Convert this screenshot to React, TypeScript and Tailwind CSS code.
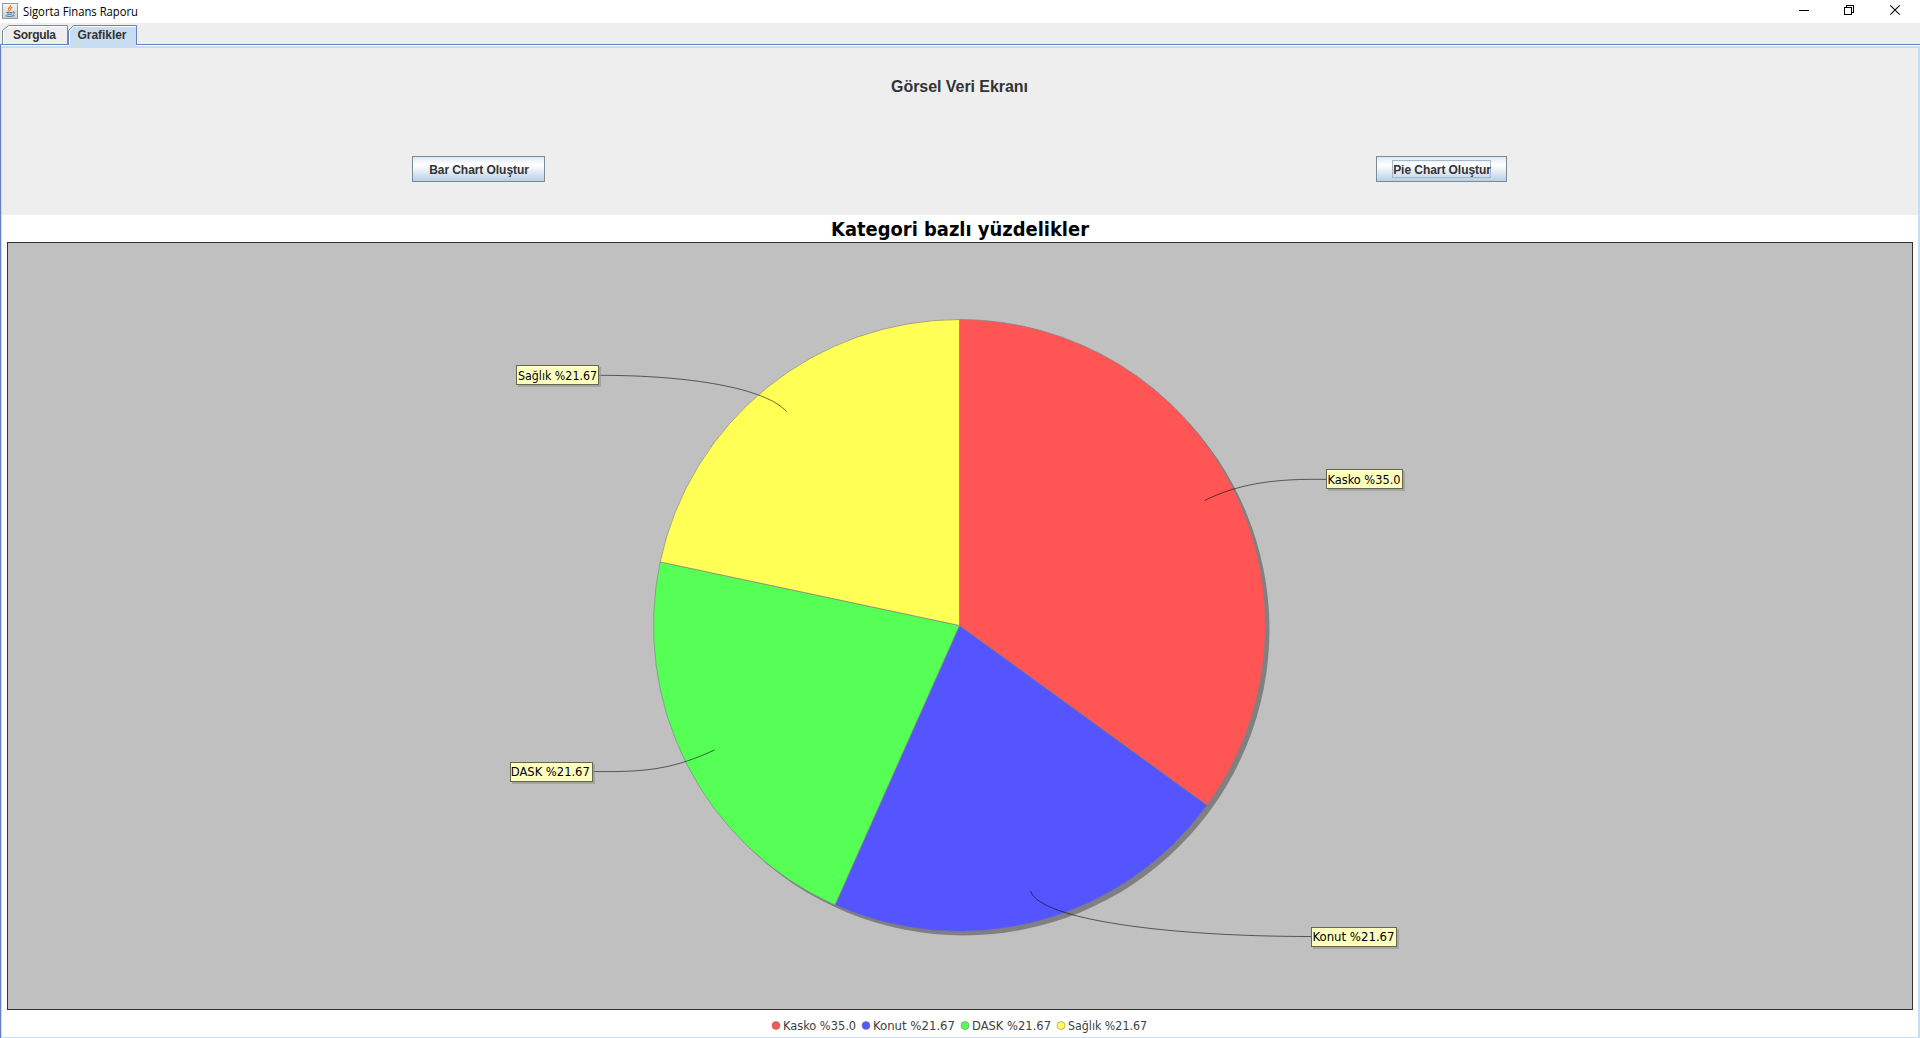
const CX = 959.5;
const CY = 625.5;
const R = 306;

const point = (deg: number) => {
  const a = (deg * Math.PI) / 180;
  return `${(CX + R * Math.sin(a)).toFixed(2)} ${(CY - R * Math.cos(a)).toFixed(2)}`;
};

const slices = [
  { label: "Kasko %35.0", color: "#ff5555", from: 0, to: 126, legend: "w-[72px]", gap: "mr-[6px]", tw: 73 },
  { label: "Konut %21.67", color: "#5555ff", from: 126, to: 204, legend: "w-[81px]", gap: "mr-[6px]", tw: 82 },
  { label: "DASK %21.67", color: "#55ff55", from: 204, to: 282, legend: "w-[78px]", gap: "mr-[6px]", tw: 79 },
  { label: "Sağlık %21.67", color: "#ffff55", from: 282, to: 360, legend: "w-[78px]", gap: "", tw: 79 },
];

const labels = [
  { text: "Sağlık %21.67", x: 516, y: 365, w: 82, line: "M599 375.3 C690 375.3 765 388 786.5 411.5", tx: 518, ty: 380, tw: 79 },
  { text: "Kasko %35.0", x: 1326, y: 469, w: 76, line: "M1326 479.4 C1277 478.5 1240 483 1204.5 500.5", tx: 1327.5, ty: 484, tw: 73 },
  { text: "DASK %21.67", x: 510, y: 762, w: 82, line: "M593 771.5 C650 772.5 675 768 714.5 750", tx: 510.8, ty: 776, tw: 79 },
  { text: "Konut %21.67", x: 1311, y: 927, w: 85, line: "M1311 936.5 C1170 936.5 1040 920 1030.5 891", tx: 1312.5, ty: 941, tw: 82 },
];

function JavaIcon() {
  return (
    <svg width="16" height="16" viewBox="0 0 16 16">
      <defs>
        <linearGradient id="cup" x1="0" y1="0" x2="0" y2="1">
          <stop offset="0" stopColor="#f8f8f8" />
          <stop offset="1" stopColor="#c6cdd2" />
        </linearGradient>
      </defs>
      <rect x=".5" y=".5" width="15" height="15" fill="url(#cup)" stroke="#8a9aa6" />
      <path d="M8.7 2.2C9.2 4 5.6 4.6 6.4 6.6L7.7 8.3M10.5 4C8.2 5.1 8.1 5.8 9 7.2" fill="none" stroke="#ef7d24" strokeWidth="1.2" />
      <path d="M4.2 9.2Q7.5 10.2 10.7 9.2M5 11Q7.5 11.8 10 11M11 9C13.6 8.5 12.8 10.8 11 11.2M3.4 12.8Q7.5 14.4 12.4 12.6" fill="none" stroke="#447594" />
    </svg>
  );
}

function TitleBar() {
  return (
    <header className="flex h-[23px] shrink-0 items-start bg-white">
      <div className="ml-[2px] mt-[3px]"><JavaIcon /></div>
      <svg width="130" height="22" className="ml-[5px]">
        <text x="0" y="16" textLength="115" lengthAdjust="spacingAndGlyphs" className="fill-black font-['Open_Sans',sans-serif] text-[12px]">Sigorta Finans Raporu</text>
      </svg>
      <svg width="80" height="22" className="ml-auto overflow-visible" fill="none" stroke="#000" shapeRendering="crispEdges">
        <path d="M-1 10.5H9" />
        <path d="M44.5 7.5h7v7h-7zM46.5 7V5.5H53.5V12.5H52" />
      </svg>
      <svg width="40" height="22" fill="none" stroke="#000">
        <path d="M10.3 5.3L19.7 14.7M19.7 5.3L10.3 14.7" strokeWidth="1.05" />
      </svg>
    </header>
  );
}

function Tabs() {
  return (
    <nav className="h-[21px] shrink-0 bg-[#eeeeee]">
      <svg width="140" height="24" className="relative block">
        <path d="M2.5 21V7.5L8.5 2.5H67.5V21" fill="#eeeeee" stroke="#7a8a99" />
        <path d="M3.5 21V8L9 3.5H67" fill="none" stroke="#ffffff" />
        <path d="M69 24V7.5L73.5 2.5H136V24Z" fill="#c8ddf2" />
        <path d="M68.5 22V7.5L73.5 2.5H136.5V22" fill="none" stroke="#6382bf" />
        <path d="M69.5 22V8L74 3.5H136" fill="none" stroke="#ffffff" />
        <g className="fill-[#333333] font-['Liberation_Sans',sans-serif] text-[12px] font-bold">
          <text x="13" y="16" textLength="43">Sorgula</text>
          <text x="77.5" y="16" textLength="49">Grafikler</text>
        </g>
      </svg>
    </nav>
  );
}

const buttonFace =
  "flex h-[26px] items-center justify-center border border-[#7a8a99] bg-[linear-gradient(180deg,#dde8f3_0%,#ffffff_30%,#ffffff_36%,#b8cfe5_100%)] font-['Liberation_Sans',sans-serif] text-[12px] font-bold text-[#333333]";

function Controls() {
  return (
    <section className="h-[167px] shrink-0 bg-[#eeeeee]">
      <h1 className="pt-[28px] pr-px text-center font-['Liberation_Sans',sans-serif] text-[16px] leading-[22px] font-bold tracking-[-0.06px] text-[#333333]">
        Görsel Veri Ekranı
      </h1>
      <div className="mt-[58px] flex justify-between pr-[411px] pl-[410px]">
        <button className={`w-[133px] pt-[2px] pl-px tracking-[-0.06px] ${buttonFace}`}>Bar Chart Oluştur</button>
        <button className={`w-[131px] tracking-[-0.06px] ${buttonFace}`}>
          <span className="flex h-[18px] w-[99px] shrink-0 items-center justify-center whitespace-nowrap border border-[#a3b8cc] pt-[2px] pl-px">Pie Chart Oluştur</span>
        </button>
      </div>
    </section>
  );
}

function PieChart() {
  return (
    <svg className="ml-[5px] block shrink-0" width="1906" height="768" viewBox="7 242 1906 768">
      <rect x="7.5" y="242.5" width="1905" height="767" fill="#c0c0c0" stroke="#333333" />
      <circle cx={CX + 4} cy={CY + 4} r={R} fill="#808080" />
      {slices.map((s) => (
        <path
          key={s.label}
          d={`M${CX} ${CY}L${point(s.from)}A${R} ${R} 0 0 1 ${point(s.to)}Z`}
          fill={s.color}
          stroke="#808080"
          strokeWidth=".65"
        />
      ))}
      {labels.map((l) => (
        <g key={l.text}>
          <path d={l.line} fill="none" stroke="#000000" strokeOpacity=".75" strokeWidth=".75" />
          <rect x={l.x + 2} y={l.y + 2} width={l.w + 1} height="20" fill="#979797" fillOpacity=".65" />
          <rect x={l.x + 0.5} y={l.y + 0.5} width={l.w} height="19" fill="#ffffc0" stroke="#66664f" />
          <text x={l.tx} y={l.ty} textLength={l.tw} lengthAdjust="spacingAndGlyphs" className="fill-black font-['DejaVu_Sans_Condensed','DejaVu_Sans',sans-serif] text-[12px] [font-stretch:condensed]">
            {l.text}
          </text>
        </g>
      ))}
    </svg>
  );
}

function Legend() {
  return (
    <div className="flex h-[27px] shrink-0 items-start pt-[6px] pl-[769px]">
      {slices.map((s) => (
        <div key={s.label} className={`flex ${s.gap}`}>
          <svg width="12" height="20">
            <circle cx="5" cy="9.5" r="4" fill={s.color} stroke="#808080" strokeWidth=".6" />
          </svg>
          <svg height="20" className={`overflow-visible ${s.legend}`}>
            <text x="0" y="14" textLength={s.tw} lengthAdjust="spacingAndGlyphs" className="fill-[#404040] font-['DejaVu_Sans_Condensed','DejaVu_Sans',sans-serif] text-[12px] [font-stretch:condensed]">
              {s.label}
            </text>
          </svg>
        </div>
      ))}
    </div>
  );
}

export default function App() {
  return (
    <div className="flex h-[1038px] w-[1920px] flex-col overflow-hidden bg-white">
      <TitleBar />
      <Tabs />
      <main className="grid min-h-0 flex-1 grid-rows-[1px_1fr] border-x border-t border-[#6382bf]">
        <div className="bg-white" />
        <div className="flex min-h-0 flex-col border-t-2 border-r-2 border-b border-l border-[#c8ddf2] bg-white">
          <Controls />
          <h2 className="h-[27px] shrink-0">
            <svg width="1916" height="27" className="block">
              <text x="829" y="21" textLength="258" lengthAdjust="spacingAndGlyphs" className="fill-black font-['DejaVu_Sans_Condensed','DejaVu_Sans',sans-serif] text-[20px] font-bold [font-stretch:condensed]">
                Kategori bazlı yüzdelikler
              </text>
            </svg>
          </h2>
          <PieChart />
          <Legend />
        </div>
      </main>
    </div>
  );
}
